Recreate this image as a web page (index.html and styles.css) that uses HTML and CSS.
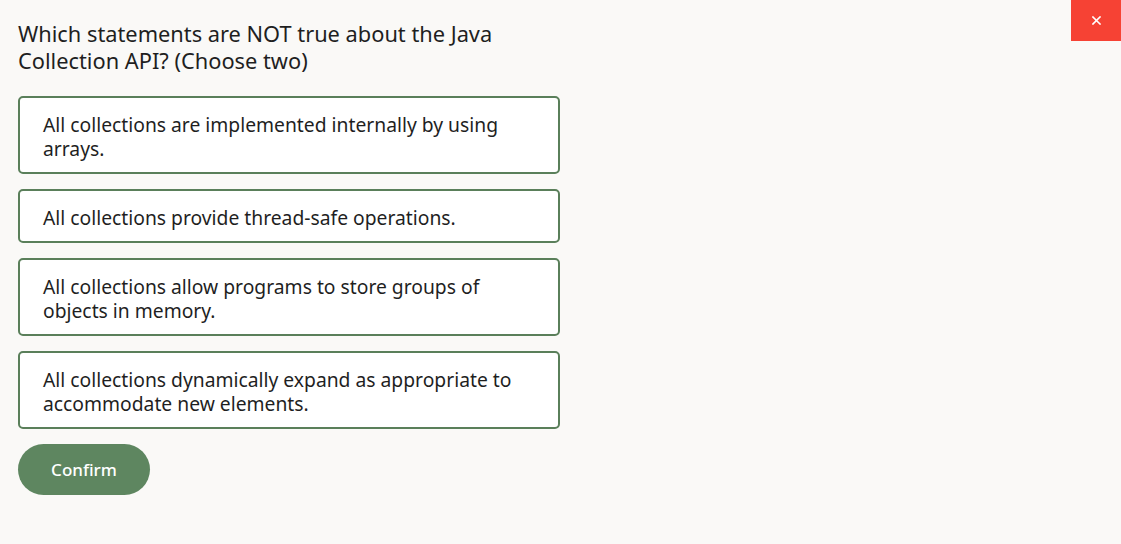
FILE: index.html
```html
<!DOCTYPE html>
<html lang="en">
<head>
<meta charset="utf-8">
<title>Quiz</title>
<link rel="stylesheet" href="styles.css">
</head>
<body>
<button class="close" aria-label="Close">
  <svg width="9" height="9" viewBox="0 0 9 9"><path d="M1 1L8 8M8 1L1 8" stroke="#fff" stroke-width="1.6" stroke-linecap="square"/></svg>
</button>
<main class="quiz">
  <h1 class="question">Which statements are NOT true about the Java Collection API? (Choose two)</h1>
  <div class="options">
    <div class="option">All collections are implemented internally by using arrays.</div>
    <div class="option">All collections provide thread-safe operations.</div>
    <div class="option">All collections allow programs to store groups of objects in memory.</div>
    <div class="option">All collections dynamically expand as appropriate to accommodate new elements.</div>
  </div>
  <button class="confirm">Confirm</button>
</main>
</body>
</html>
```
FILE: styles.css
```css
html, body {
  margin: 0;
  padding: 0;
  background: #faf9f7;
  font-family: "Noto Sans", "Open Sans", sans-serif;
  color: #1f1f1f;
}
.close {
  position: absolute;
  top: 0;
  right: 0;
  width: 50px;
  height: 41px;
  border: 0;
  padding: 0;
  background: #f64234;
  display: flex;
  align-items: center;
  justify-content: center;
  cursor: pointer;
}
.quiz {
  padding: 20px 18px 0 18px;
  width: 542px;
}
.question {
  margin: 0 0 22px 0;
  font-size: 21.8px;
  line-height: 27px;
  font-weight: 400;
  color: #1f1f1f;
}
.options {
  display: flex;
  flex-direction: column;
  gap: 15px;
}
.option {
  background: #fff;
  border: 2px solid #5a7f5a;
  border-radius: 5px;
  padding: 15px 23px 11px 23px;
  font-size: 19.3px;
  line-height: 24px;
}
.confirm {
  margin-top: 15px;
  width: 132px;
  height: 51px;
  border: 0;
  border-radius: 26px;
  background: #5e8660;
  color: #fff;
  font-family: "Noto Sans", "Open Sans", sans-serif;
  font-size: 17px;
  font-weight: 500;
}
```
